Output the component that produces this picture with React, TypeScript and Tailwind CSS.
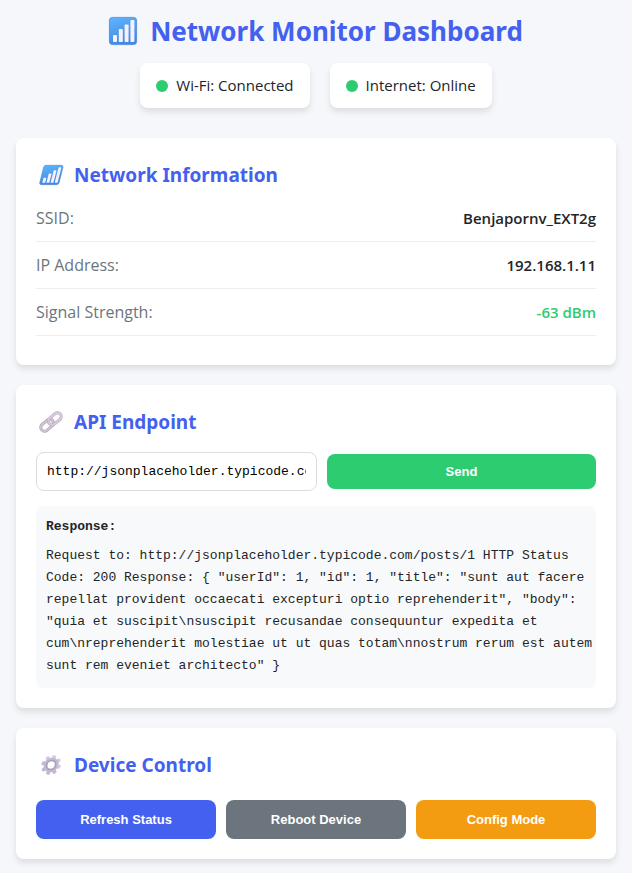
import { useState } from "react";
import type { ReactNode } from "react";

function SignalIcon({ size, slanted = false }: { size: number; slanted?: boolean }) {
  const id = slanted ? "signal-slanted" : "signal";
  return (
    <svg width={size} height={size} viewBox="0 0 28 28" aria-hidden="true" className="shrink-0 overflow-visible">
      <defs>
        <linearGradient id={id} x1="0" y1="0" x2="0.3" y2="1">
          <stop offset="0" stopColor="#5eb5fb" />
          <stop offset="1" stopColor="#4289e2" />
        </linearGradient>
      </defs>
      <g transform={slanted ? "translate(4 0) skewX(-14)" : undefined}>
        <rect x="0.4" y="0.4" width="27.2" height="27.2" rx="3" fill={`url(#${id})`} stroke="#3f83d6" strokeWidth="0.7" />
        <g fill="#f6effc">
          <rect x="4" y="18" width="4" height="7" rx="0.8" />
          <rect x="9.8" y="12" width="4" height="13" rx="0.8" />
          <rect x="15.6" y="7.5" width="4" height="17.5" rx="0.8" />
          <rect x="21.4" y="3" width="4" height="22" rx="0.8" />
        </g>
      </g>
    </svg>
  );
}

function LinkIcon() {
  return (
    <svg width="24" height="24" viewBox="0 0 24 24" aria-hidden="true" className="shrink-0" fill="none">
      <g transform="rotate(-40 12 12)">
        <rect x="-0.2" y="8.2" width="14.4" height="7.6" rx="3.8" stroke="#b3a7b9" strokeWidth="3" />
        <rect x="-0.2" y="8.2" width="14.4" height="7.6" rx="3.8" stroke="#cdc3d3" strokeWidth="1.8" />
        <rect x="9.8" y="8.2" width="14.4" height="7.6" rx="3.8" stroke="#b3a7b9" strokeWidth="3" />
        <rect x="9.8" y="8.2" width="14.4" height="7.6" rx="3.8" stroke="#d6ccdd" strokeWidth="2" />
      </g>
    </svg>
  );
}

const teeth = [0, 45, 90, 135, 180, 225, 270, 315];

function GearIcon() {
  return (
    <svg width="24" height="24" viewBox="0 0 24 24" aria-hidden="true" className="shrink-0">
      <g transform="translate(2 0) skewX(-9)">
        {teeth.map((angle) => (
          <path
            key={angle}
            d="M10 7 L10 3.6 Q10.2 2 12 2 Q13.8 2 14 3.6 L14 7 Z"
            fill={angle > 90 && angle < 300 ? "#c3b8d6" : "#d3cbe2"}
            transform={`rotate(${angle + 12} 12 12)`}
          />
        ))}
        <circle cx="12" cy="12" r="5.6" fill="none" stroke="#c2b8d2" strokeWidth="3.4" />
        <circle cx="12" cy="12" r="4.4" fill="none" stroke="#aaa0b3" strokeWidth="1.5" />
      </g>
    </svg>
  );
}

function StatusPill({ children }: { children: ReactNode }) {
  return (
    <div className="flex items-center gap-2 rounded-lg bg-white px-4 py-[10px] text-[15px] leading-[25px] shadow-[0_4px_6px_rgba(0,0,0,0.1)]">
      <span className="size-3 rounded-full bg-[#2ecc71]" />
      <span>{children}</span>
    </div>
  );
}

function Card({ icon, title, children }: { icon: ReactNode; title: string; children: ReactNode }) {
  return (
    <section className="rounded-lg bg-white p-5 shadow-[0_4px_6px_rgba(0,0,0,0.1)]">
      <h2 className="flex items-center gap-[11px] pl-[3px] font-['Noto_Sans',sans-serif] text-[19px] leading-[34px] font-bold text-[#4361ee]">
        {icon}
        {title}
      </h2>
      {children}
    </section>
  );
}

function InfoRow({ label, value, good = false }: { label: string; value: string; good?: boolean }) {
  return (
    <div className="flex justify-between border-b border-[#eeeeee] py-[10px] text-[15px] leading-[26px]">
      <dt className="text-base leading-[26px] font-medium text-[#6c757d]">{label}</dt>
      <dd className={good ? "font-semibold text-[#2ecc71]" : "font-semibold"}>{value}</dd>
    </div>
  );
}

const responseText =
  'Request to: http://jsonplaceholder.typicode.com/posts/1 HTTP Status Code: 200 Response: { "userId": 1, "id": 1, "title": "sunt aut facere repellat provident occaecati excepturi optio reprehenderit", "body": "quia et suscipit\\nsuscipit recusandae consequuntur expedita et cum\\nreprehenderit molestiae ut ut quas totam\\nnostrum rerum est autem sunt rem eveniet architecto" }';

const controlButton =
  "h-[39px] flex-1 rounded-lg font-['Liberation_Sans',Arial,sans-serif] text-[13px] font-bold text-white";

export default function App() {
  const [url, setUrl] = useState("http://jsonplaceholder.typicode.com/posts/1");

  return (
    <main className="min-h-screen bg-[#f5f7fb] px-4 pt-2 pb-[14px] font-['Open_Sans',sans-serif] text-[#212529]">
      <header className="mb-[30px] flex flex-col items-center gap-[9px]">
        <h1 className="flex items-center gap-[13px] font-['Noto_Sans',sans-serif] text-[26px] leading-[46px] font-bold text-[#4361ee]">
          <SignalIcon size={28} />
          Network Monitor Dashboard
        </h1>
        <div className="flex flex-wrap justify-center gap-5">
          <StatusPill>Wi-Fi: Connected</StatusPill>
          <StatusPill>Internet: Online</StatusPill>
        </div>
      </header>

      <div className="flex flex-col gap-5">
        <Card icon={<span className="flex w-6 justify-center"><SignalIcon size={20} slanted /></span>} title="Network Information">
          <dl className="mt-[3px] mb-[9px]">
            <InfoRow label="SSID:" value="Benjapornv_EXT2g" />
            <InfoRow label="IP Address:" value="192.168.1.11" />
            <InfoRow label="Signal Strength:" value="-63 dBm" good />
          </dl>
        </Card>

        <Card icon={<LinkIcon />} title="API Endpoint">
          <div className="mt-[13px] flex items-center gap-[10px]">
            <input
              type="text"
              aria-label="Endpoint URL"
              value={url}
              onChange={(event) => setUrl(event.target.value)}
              className="h-[39px] w-[281px] min-w-0 rounded-lg border border-[#dddddd] bg-white px-[10px] font-['Liberation_Mono',monospace] text-[13px] text-black"
            />
            <button
              type="button"
              className="h-[35px] flex-1 rounded-lg bg-[#2ecc71] font-['Liberation_Sans',Arial,sans-serif] text-[13px] font-bold text-white"
            >
              Send
            </button>
          </div>
          <div className="mt-[15px] rounded-lg bg-[#f8f9fa] py-[10px] pr-[2px] pl-[10px] font-['Liberation_Mono',monospace] text-[13px] leading-[22px]">
            <h3 className="mb-[7px] font-bold">Response:</h3>
            <p className="pb-[1px]">{responseText}</p>
          </div>
        </Card>

        <Card icon={<GearIcon />} title="Device Control">
          <div className="mt-[18px] flex gap-[10px]">
            <button type="button" className={`${controlButton} bg-[#4361ee]`}>Refresh Status</button>
            <button type="button" className={`${controlButton} bg-[#6c757d]`}>Reboot Device</button>
            <button type="button" className={`${controlButton} bg-[#f39c12]`}>Config Mode</button>
          </div>
        </Card>
      </div>
    </main>
  );
}
